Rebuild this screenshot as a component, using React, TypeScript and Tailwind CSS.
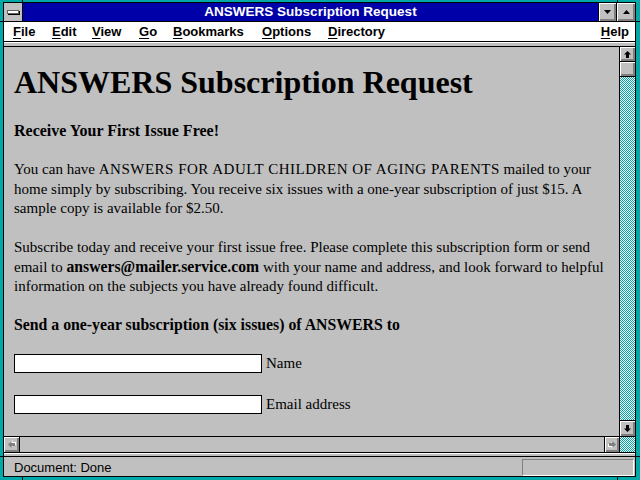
import React from 'react'

const bevel = 'shadow-[inset_1px_1px_0_#ffffff,inset_-2px_-2px_0_#808080]'
const checker = 'bg-[image:repeating-conic-gradient(#00a8a8_0%_25%,#ffffff_0%_50%)] bg-[length:2px_2px]'

function Arrow({ rotate = 0, gray = false }: { rotate?: number; gray?: boolean }) {
  const pts = '3.5,0 7,3.5 5,3.5 5,7 2,7 2,3.5 0,3.5'
  return (
    <svg width="9" height="9" viewBox="-1 -1 9 9" style={{ transform: `rotate(${rotate}deg)` }}>
      {gray && <polygon points={pts} fill="#ffffff" transform="translate(1 1)" />}
      <polygon points={pts} fill={gray ? '#808080' : '#000000'} />
    </svg>
  )
}

function MenuItem({ label, width }: { label: string; width: number }) {
  return (
    <span className="shrink-0" style={{ width }}>
      <span className="underline underline-offset-2 decoration-1">{label[0]}</span>
      {label.slice(1)}
    </span>
  )
}

export default function App() {
  return (
    <div className="relative w-[640px] h-[480px] overflow-hidden bg-[#00a8a8] pt-[2px] pl-[3px] pr-[4px] pb-[3px] font-['Liberation_Sans',sans-serif]">
      {/* frame notches */}
      <div className="absolute left-[22px] top-0 w-px h-[3px] bg-black" />
      <div className="absolute left-[617px] top-0 w-px h-[3px] bg-black" />
      <div className="absolute left-[22px] bottom-0 w-px h-[3px] bg-black" />
      <div className="absolute left-[617px] bottom-0 w-px h-[3px] bg-black" />
      <div className="absolute left-0 top-[21px] w-[3px] h-px bg-black" />
      <div className="absolute left-0 top-[456px] w-[3px] h-px bg-black" />
      <div className="absolute right-0 top-[21px] w-[4px] h-px bg-black" />
      <div className="absolute right-0 top-[456px] w-[4px] h-px bg-black" />

      <div className="h-full border border-black flex flex-col bg-[#c0c0c0]">
        {/* Title bar */}
        <div className="h-[18px] flex shrink-0">
          <div className="w-[18px] bg-[#c0c0c0] flex items-center justify-center">
            <div className="w-[12px] h-[4px] bg-white border border-[#606060] shadow-[1px_1px_0_#000000]" />
          </div>
          <div className="w-px bg-black" />
          <div className="flex-1 bg-[#0000a8] text-white text-[13.5px] font-bold flex items-center justify-center leading-none">
            ANSWERS Subscription Request
          </div>
          <div className="w-px bg-black" />
          <div className={`w-[17px] bg-[#c0c0c0] flex items-center justify-center ${bevel}`}>
            <svg width="7" height="4" viewBox="0 0 7 4"><polygon points="0,0 7,0 3.5,4" fill="#000" /></svg>
          </div>
          <div className="w-px bg-black" />
          <div className={`w-[18px] bg-[#c0c0c0] flex items-center justify-center ${bevel}`}>
            <svg width="7" height="4" viewBox="0 0 7 4"><polygon points="0,4 7,4 3.5,0" fill="#000" /></svg>
          </div>
        </div>
        <div className="h-px bg-black shrink-0" />

        {/* Menu bar */}
        <div className="h-[19px] bg-white flex items-center pl-[9px] pr-[6px] text-[13px] font-bold text-black shrink-0">
          <MenuItem label="File" width={39} />
          <MenuItem label="Edit" width={40} />
          <MenuItem label="View" width={47} />
          <MenuItem label="Go" width={34} />
          <MenuItem label="Bookmarks" width={89} />
          <MenuItem label="Options" width={66} />
          <MenuItem label="Directory" width={80} />
          <span className="ml-auto">
            <span className="underline underline-offset-2 decoration-1">H</span>elp
          </span>
        </div>
        <div className="h-px bg-black shrink-0" />
        <div className="h-px bg-white shrink-0" />
        <div className="h-[3px] bg-[#c0c0c0] shrink-0" />
        <div className="h-px bg-black shrink-0" />

        {/* Document + vertical scrollbar */}
        <div className="flex-1 flex min-h-0">
          <div className="flex-1 min-w-0 overflow-hidden pl-[10px] font-['Liberation_Serif',serif] text-black">
            <h1 className="mt-[17px] text-[32px] font-bold leading-[36px] whitespace-nowrap">ANSWERS Subscription Request</h1>
            <p className="mt-[21px] text-[16px] font-bold leading-[19.5px]">Receive Your First Issue Free!</p>
            <p className="mt-[19.5px] text-[15px] leading-[19.5px] whitespace-nowrap">
              <span className="block">
                You can have <span className="tracking-[0.5px]">ANSWERS FOR ADULT CHILDREN OF AGING PARENTS</span> mailed to your
              </span>
              <span className="block">home simply by subscribing. You receive six issues with a one-year subscription of just $15. A</span>
              <span className="block">sample copy is available for $2.50.</span>
            </p>
            <p className="mt-[19.5px] text-[15px] leading-[19.5px] whitespace-nowrap">
              <span className="block">Subscribe today and receive your first issue free. Please complete this subscription form or send</span>
              <span className="block">
                email to <b className="text-[15.7px] leading-none">answers@mailer.service.com</b> with your name and address, and look forward to helpful
              </span>
              <span className="block">information on the subjects you have already found difficult.</span>
            </p>
            <p className="mt-[18px] text-[15.8px] font-bold leading-[19.5px] whitespace-nowrap">
              Send a one-year subscription (six issues) of ANSWERS to
            </p>
            <div className="mt-[20px] flex items-center gap-[4px] text-[15px] leading-[19px]">
              <div className="w-[248px] h-[19px] shrink-0 bg-white border border-black" />
              <span>Name</span>
            </div>
            <div className="mt-[22px] flex items-center gap-[4px] text-[15px] leading-[19px]">
              <div className="w-[248px] h-[19px] shrink-0 bg-white border border-black" />
              <span>Email address</span>
            </div>
          </div>
          <div className="w-px bg-black" />
          <div className="w-[15px] flex flex-col">
            <div className={`h-[14px] bg-[#c0c0c0] flex items-center justify-center ${bevel}`}>
              <Arrow />
            </div>
            <div className="h-px bg-black" />
            <div className={`h-[14px] bg-[#c0c0c0] ${bevel}`} />
            <div className="h-px bg-black" />
            <div className={`flex-1 ${checker}`} />
            <div className="h-px bg-black" />
            <div className={`h-[15px] bg-[#c0c0c0] flex items-center justify-center ${bevel}`}>
              <Arrow rotate={180} />
            </div>
          </div>
        </div>
        <div className="h-px bg-black shrink-0" />

        {/* Horizontal scrollbar */}
        <div className="h-[15px] flex shrink-0">
          <div className={`w-[15px] bg-[#c0c0c0] flex items-center justify-center ${bevel}`}>
            <Arrow rotate={-90} gray />
          </div>
          <div className="w-px bg-black" />
          <div className="flex-1 bg-[#c0c0c0]" />
          <div className="w-px bg-black" />
          <div className={`w-[14px] bg-[#c0c0c0] flex items-center justify-center ${bevel}`}>
            <Arrow rotate={90} gray />
          </div>
          <div className="w-px bg-black" />
          <div className={`w-[15px] ${checker}`} />
        </div>
        <div className="h-px bg-black shrink-0" />
        <div className="h-px bg-white shrink-0" />
        <div className="h-[2px] bg-[#c0c0c0] shrink-0" />
        <div className="h-px bg-black shrink-0" />

        {/* Status bar */}
        <div className="h-[19px] shrink-0 flex items-start pt-[2px] pr-px">
          <div className="flex-1 pl-[10px] pt-[1px] text-[13px] leading-[15px] text-black">Document: Done</div>
          <div className="w-[112px] h-full border-t border-l border-[#808080] border-b border-r border-b-white border-r-white" />
        </div>
      </div>
    </div>
  )
}
